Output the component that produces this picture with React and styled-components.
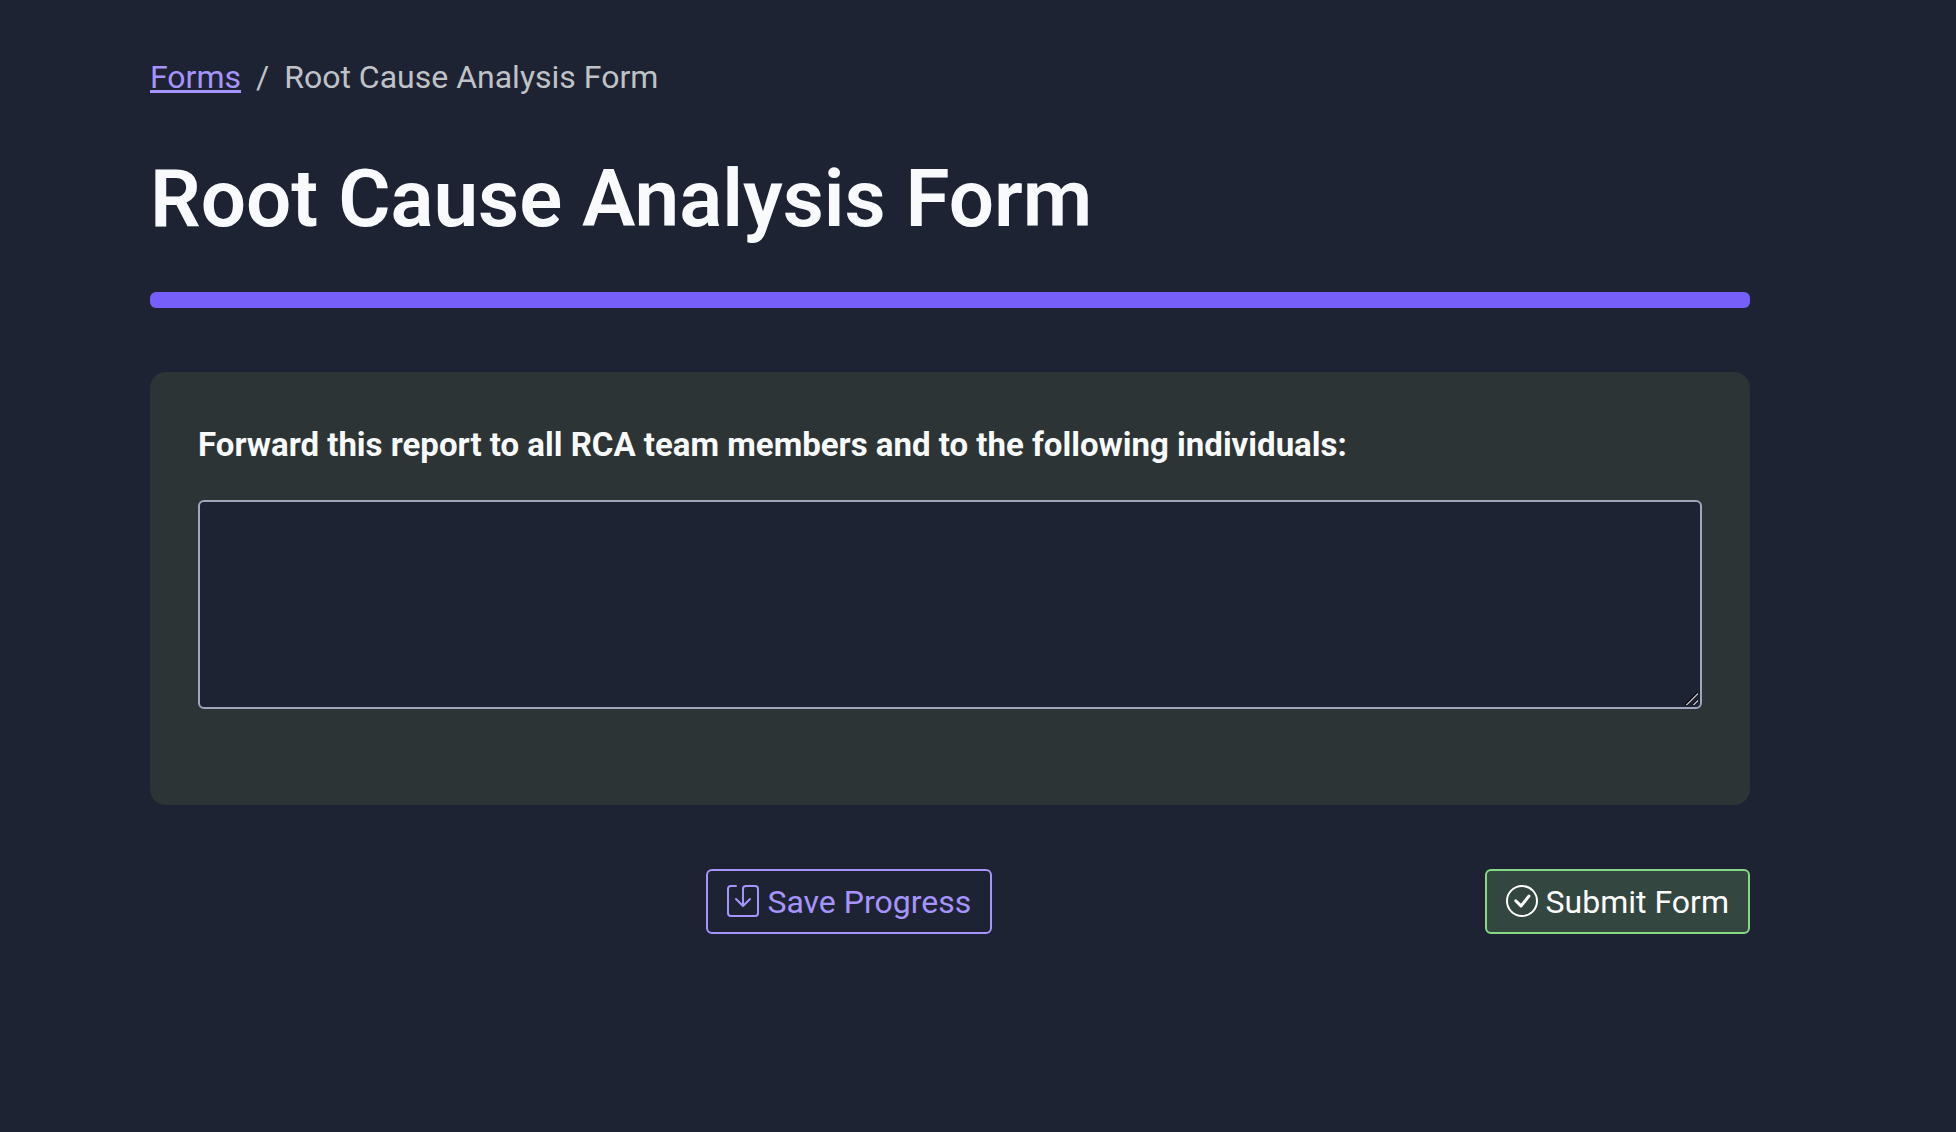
import React from "react";
import styled, { createGlobalStyle } from "styled-components";
import { BsSave, BsCheckCircle } from "react-icons/bs";

const GlobalStyle = createGlobalStyle`
  *, *::before, *::after {
    box-sizing: border-box;
  }
  body {
    margin: 0;
    background: #1e2333;
    color: #f8fafc;
    font-family: Roboto, "Liberation Sans", sans-serif;
    font-size: 32px;
    line-height: 48px;
  }
`;

const Page = styled.main`
  padding: 53px 206px 64px 150px;
`;

const Breadcrumb = styled.ol`
  display: flex;
  flex-wrap: wrap;
  gap: 15px;
  margin: 0 0 48px;
  padding: 0;
  list-style: none;
  color: #bfc2c7;
`;

const CrumbLink = styled.a`
  color: #a594fd;
  text-decoration: underline;
  text-decoration-thickness: 3px;
  text-underline-offset: 2px;
`;

const Title = styled.h1`
  margin: 0;
  font-size: 80px;
  font-weight: 600;
  line-height: 100px;
`;

const Rule = styled.hr`
  height: 16px;
  margin: 43px 0 64px;
  border: 0;
  border-radius: 6px;
  background: #765ff9;
`;

const Card = styled.section`
  display: flex;
  flex-direction: column;
  padding: 48px 48px 96px;
  border-radius: 16px;
  background: #2d3436;
`;

const Label = styled.label`
  margin-bottom: 30px;
  font-size: 33px;
  font-weight: 700;
  line-height: 50px;
`;

const TextArea = styled.textarea`
  display: block;
  width: 100%;
  height: 209px;
  padding: 12px 20px;
  border: 2px solid #a0a6bc;
  border-radius: 6px;
  background: #1e2333;
  color: inherit;
  font: inherit;
  resize: vertical;

  &::-webkit-resizer {
    background: linear-gradient(
        135deg,
        transparent 46%,
        #0c0e15 46%,
        #0c0e15 50%,
        #a9abae 50%,
        #a9abae 58%,
        transparent 58%,
        transparent 76%,
        #0c0e15 76%,
        #0c0e15 80%,
        #a9abae 80%,
        #a9abae 88%,
        transparent 88%
      )
      left top / 13px 13px no-repeat;
  }
`;

const Actions = styled.div`
  display: flex;
  justify-content: space-between;
  margin-top: 64px;
`;

const BackSlot = styled.div`
  width: 64px;
`;

const Button = styled.button`
  display: inline-flex;
  align-items: center;
  gap: 8px;
  height: 65px;
  padding: 0 19px;
  border: 2px solid ${(p) => (p.$primary ? "#86d984" : "#a594fd")};
  border-radius: 6px;
  background: ${(p) => (p.$primary ? "#344640" : "transparent")};
  color: ${(p) => (p.$primary ? "#ffffff" : "#a594fd")};
  font: inherit;
  cursor: pointer;

  svg {
    flex: none;
    width: 32px;
    height: 32px;
    margin-bottom: 2px;
  }
`;

export default function App() {
  return (
    <>
      <GlobalStyle />
      <Page>
        <nav aria-label="Breadcrumb">
          <Breadcrumb>
            <li>
              <CrumbLink href="#forms">Forms</CrumbLink>
            </li>
            <li aria-hidden="true">/</li>
            <li aria-current="page">Root Cause Analysis Form</li>
          </Breadcrumb>
        </nav>
        <Title>Root Cause Analysis Form</Title>
        <Rule />
        <form onSubmit={(e) => e.preventDefault()}>
          <Card>
            <Label htmlFor="recipients">
              Forward this report to all RCA team members and to the following individuals:
            </Label>
            <TextArea id="recipients" />
          </Card>
          <Actions>
            <BackSlot />
            <Button type="button">
              <BsSave aria-hidden="true" />
              Save Progress
            </Button>
            <Button type="submit" $primary>
              <BsCheckCircle aria-hidden="true" />
              Submit Form
            </Button>
          </Actions>
        </form>
      </Page>
    </>
  );
}
